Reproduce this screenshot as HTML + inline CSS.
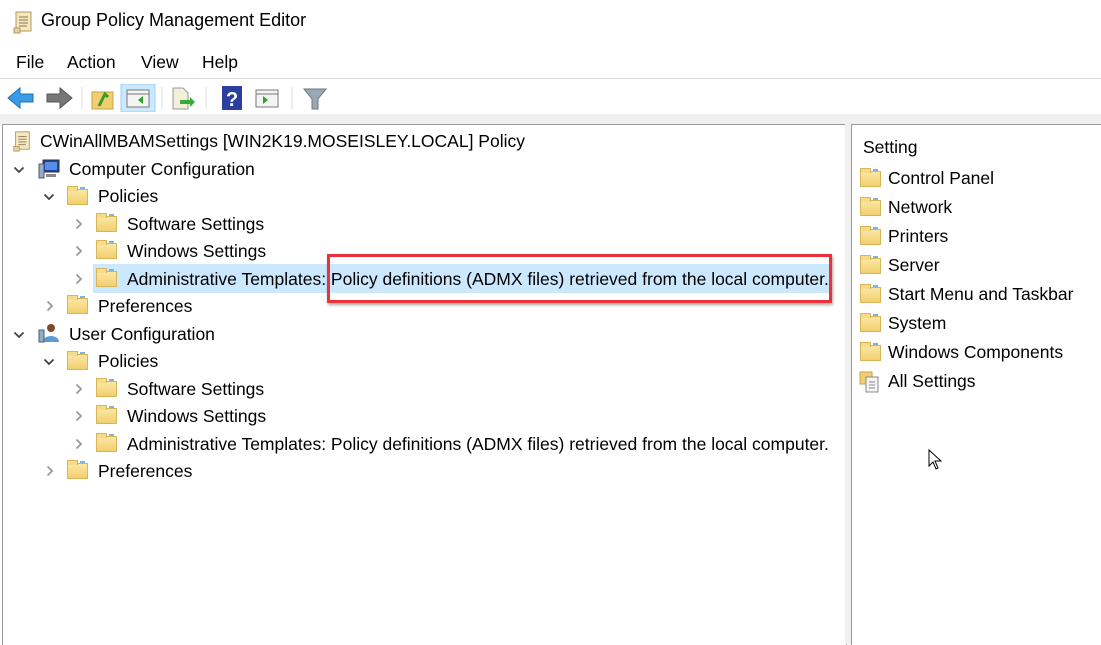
<!DOCTYPE html>
<html><head><style>
body{margin:0;width:1101px;height:642px;overflow:hidden;background:#fff;font-family:"Liberation Sans",sans-serif;color:#000;position:relative}
.a{position:absolute;white-space:nowrap}
.t{font-size:17.5px;line-height:20px}
.fold{position:absolute;width:21px;height:16px;background:linear-gradient(#fbe7a4,#f2cf6e);border:1px solid #d9b55a;box-sizing:border-box}
.fold:before{content:"";position:absolute;left:-1px;top:-4px;width:9px;height:4px;background:#f6dc8a;border:1px solid #d9b55a;border-bottom:none}
.fold:after{content:"";position:absolute;right:2px;top:-3px;width:5px;height:2px;background:#7ab4e6}
.dn,.rt{position:absolute;width:12px;height:12px}
</style></head><body>
<svg width="0" height="0" style="position:absolute"><defs>
<symbol id="d" viewBox="0 0 12 12"><path d="M1.5 3.5L6 8l4.5-4.5" fill="none" stroke="#444" stroke-width="1.8"/></symbol>
<symbol id="r" viewBox="0 0 12 12"><path d="M3.5 1.5L8 6l-4.5 4.5" fill="none" stroke="#999" stroke-width="1.8"/></symbol>
</defs></svg>
<!-- title -->
<svg class="a" style="left:12px;top:10px" width="22" height="24" viewBox="0 0 22 24"><rect x="4" y="2" width="15" height="19" fill="#f4e7c2" stroke="#b59a5e"/><rect x="2" y="18" width="6" height="5" fill="#e4d3a3" stroke="#b59a5e"/><path d="M7 7h9M7 10h9M7 13h9M7 16h8" stroke="#8a7a55"/></svg>
<div class="a" style="left:41px;top:10px;font-size:18px">Group Policy Management Editor</div>
<div class="a" style="left:16px;top:52px;font-size:17.5px">File</div>
<div class="a" style="left:67px;top:52px;font-size:17.5px">Action</div>
<div class="a" style="left:141px;top:52px;font-size:17.5px">View</div>
<div class="a" style="left:202px;top:52px;font-size:17.5px">Help</div>
<div class="a" style="left:0;top:78px;width:1101px;height:1px;background:#dadada"></div>
<!-- toolbar -->
<svg class="a" style="left:6px;top:84px" width="330" height="28" viewBox="0 0 330 28">
<path d="M2 14l12-10v6h13v8H14v6z" fill="#3a9be6" stroke="#1e6fb8"/>
<path d="M66 14L54 4v6H41v8h13v6z" fill="#777" stroke="#555"/>
<line x1="76" y1="3" x2="76" y2="25" stroke="#ddd"/>
<rect x="86" y="8" width="21" height="17" fill="#f2cf6e" stroke="#c9a24f"/><path d="M93 22l6-12 3 3" stroke="#3a9a2a" stroke-width="3" fill="none"/>
<rect x="115" y="0" width="34" height="28" fill="#cce8ff" stroke="#99d1ff"/>
<rect x="121" y="6" width="22" height="17" fill="#f4f4f4" stroke="#777"/><path d="M121 10h22" stroke="#777"/><path d="M137 12l-5 4 5 4z" fill="#2ca02c"/>
<line x1="156" y1="3" x2="156" y2="25" stroke="#ddd"/>
<path d="M167 4h10l5 5v16h-15z" fill="#f4efd8" stroke="#999"/><path d="M174 16h10v-3l5 5-5 5v-3h-10z" fill="#3aaa3a"/>
<line x1="200" y1="3" x2="200" y2="25" stroke="#ddd"/>
<rect x="216" y="2" width="20" height="24" fill="#2a3f9e"/><text x="220" y="22" fill="#fff" font-size="20" font-family="Liberation Sans" font-weight="bold">?</text>
<rect x="250" y="6" width="22" height="17" fill="#f4f4f4" stroke="#777"/><path d="M250 10h22" stroke="#777"/><path d="M257 12l5 4-5 4z" fill="#2ca02c"/>
<line x1="286" y1="3" x2="286" y2="25" stroke="#ddd"/>
<path d="M298 5h22l-8 10v10h-6V15z" fill="#9aa8b4" stroke="#6a7884"/>
</svg>
<div class="a" style="left:0;top:114px;width:1101px;height:10px;background:#f0f0f0"></div>
<!-- panes -->
<div class="a" style="left:2px;top:124px;width:843px;height:520px;border-left:1px solid #999;border-top:1px solid #999;border-right:1px solid #999"></div>
<div class="a" style="left:845px;top:124px;width:6px;height:520px;background:#f0f0f0"></div>
<div class="a" style="left:851px;top:124px;width:250px;height:520px;border-left:1px solid #999;border-top:1px solid #999"></div>
<!-- highlight -->
<div class="a" style="left:93px;top:264px;width:738px;height:29px;background:#cce8ff"></div>
<!-- tree -->
<svg class="a" style="left:11px;top:130px" width="22" height="22" viewBox="0 0 22 24"><rect x="4" y="2" width="15" height="19" fill="#f4e7c2" stroke="#b59a5e"/><rect x="2" y="18" width="6" height="5" fill="#e4d3a3" stroke="#b59a5e"/><path d="M7 7h9M7 10h9M7 13h9M7 16h8" stroke="#8a7a55"/></svg>
<div class="a t" style="left:40px;top:131px">CWinAllMBAMSettings [WIN2K19.MOSEISLEY.LOCAL] Policy</div>

<svg class="dn" style="left:13px;top:164px"><use href="#d"/></svg>
<svg class="a" style="left:37px;top:158px" width="24" height="22"><rect x="6" y="2" width="16" height="12" fill="#1e3fa8" stroke="#333"/><rect x="8" y="4" width="12" height="8" fill="#5a8fe6"/><rect x="2" y="6" width="5" height="14" fill="#8fb0c8" stroke="#556"/><rect x="9" y="16" width="10" height="3" fill="#888"/></svg>
<div class="a t" style="left:69px;top:159px">Computer Configuration</div>

<svg class="dn" style="left:43px;top:191px"><use href="#d"/></svg>
<div class="fold" style="left:67px;top:189px"></div>
<div class="a t" style="left:98px;top:186px">Policies</div>

<svg class="rt" style="left:73px;top:218px"><use href="#r"/></svg>
<div class="fold" style="left:96px;top:216px"></div>
<div class="a t" style="left:127px;top:214px">Software Settings</div>
<svg class="rt" style="left:73px;top:245px"><use href="#r"/></svg>
<div class="fold" style="left:96px;top:243px"></div>
<div class="a t" style="left:127px;top:241px">Windows Settings</div>
<svg class="rt" style="left:73px;top:273px"><use href="#r"/></svg>
<div class="fold" style="left:96px;top:271px"></div>
<div class="a t" style="left:127px;top:269px">Administrative Templates: Policy definitions (ADMX files) retrieved from the local computer.</div>
<svg class="rt" style="left:44px;top:300px"><use href="#r"/></svg>
<div class="fold" style="left:67px;top:298px"></div>
<div class="a t" style="left:98px;top:296px">Preferences</div>

<svg class="dn" style="left:13px;top:329px"><use href="#d"/></svg>
<svg class="a" style="left:37px;top:322px" width="24" height="22"><circle cx="14" cy="6" r="4" fill="#7a4a2a"/><path d="M6 20c0-8 16-8 16 0z" fill="#5a9ad6"/><rect x="2" y="8" width="5" height="12" fill="#8fb0c8" stroke="#556"/></svg>
<div class="a t" style="left:69px;top:324px">User Configuration</div>
<svg class="dn" style="left:43px;top:356px"><use href="#d"/></svg>
<div class="fold" style="left:67px;top:354px"></div>
<div class="a t" style="left:98px;top:351px">Policies</div>
<svg class="rt" style="left:73px;top:383px"><use href="#r"/></svg>
<div class="fold" style="left:96px;top:381px"></div>
<div class="a t" style="left:127px;top:379px">Software Settings</div>
<svg class="rt" style="left:73px;top:410px"><use href="#r"/></svg>
<div class="fold" style="left:96px;top:408px"></div>
<div class="a t" style="left:127px;top:406px">Windows Settings</div>
<svg class="rt" style="left:73px;top:438px"><use href="#r"/></svg>
<div class="fold" style="left:96px;top:436px"></div>
<div class="a t" style="left:127px;top:434px">Administrative Templates: Policy definitions (ADMX files) retrieved from the local computer.</div>
<svg class="rt" style="left:44px;top:465px"><use href="#r"/></svg>
<div class="fold" style="left:67px;top:463px"></div>
<div class="a t" style="left:98px;top:461px">Preferences</div>

<!-- red box -->
<div class="a" style="left:327px;top:254px;width:505px;height:49px;border:3px solid #e8333b;box-sizing:border-box;box-shadow:1px 2px 3px rgba(0,0,0,.35)"></div>

<!-- right -->
<div class="a t" style="left:863px;top:137px">Setting</div>
<div class="fold" style="left:860px;top:171px"></div><div class="a t" style="left:888px;top:168px">Control Panel</div>
<div class="fold" style="left:860px;top:200px"></div><div class="a t" style="left:888px;top:197px">Network</div>
<div class="fold" style="left:860px;top:229px"></div><div class="a t" style="left:888px;top:226px">Printers</div>
<div class="fold" style="left:860px;top:258px"></div><div class="a t" style="left:888px;top:255px">Server</div>
<div class="fold" style="left:860px;top:287px"></div><div class="a t" style="left:888px;top:284px">Start Menu and Taskbar</div>
<div class="fold" style="left:860px;top:316px"></div><div class="a t" style="left:888px;top:313px">System</div>
<div class="fold" style="left:860px;top:345px"></div><div class="a t" style="left:888px;top:342px">Windows Components</div>
<svg class="a" style="left:859px;top:368px" width="28" height="26"><rect x="1" y="4" width="12" height="12" fill="#f2cf6e" stroke="#c9a24f"/><rect x="7" y="9" width="12" height="15" fill="#f4f4f4" stroke="#888"/><path d="M10 14h6M10 17h6M10 20h6" stroke="#888"/></svg>
<div class="a t" style="left:888px;top:371px">All Settings</div>
<!-- cursor -->
<svg class="a" style="left:928px;top:449px" width="14" height="22"><path d="M1 1v16l4-4 3 7 2-1-3-7h6z" fill="#fff" stroke="#000"/></svg>
</body></html>
